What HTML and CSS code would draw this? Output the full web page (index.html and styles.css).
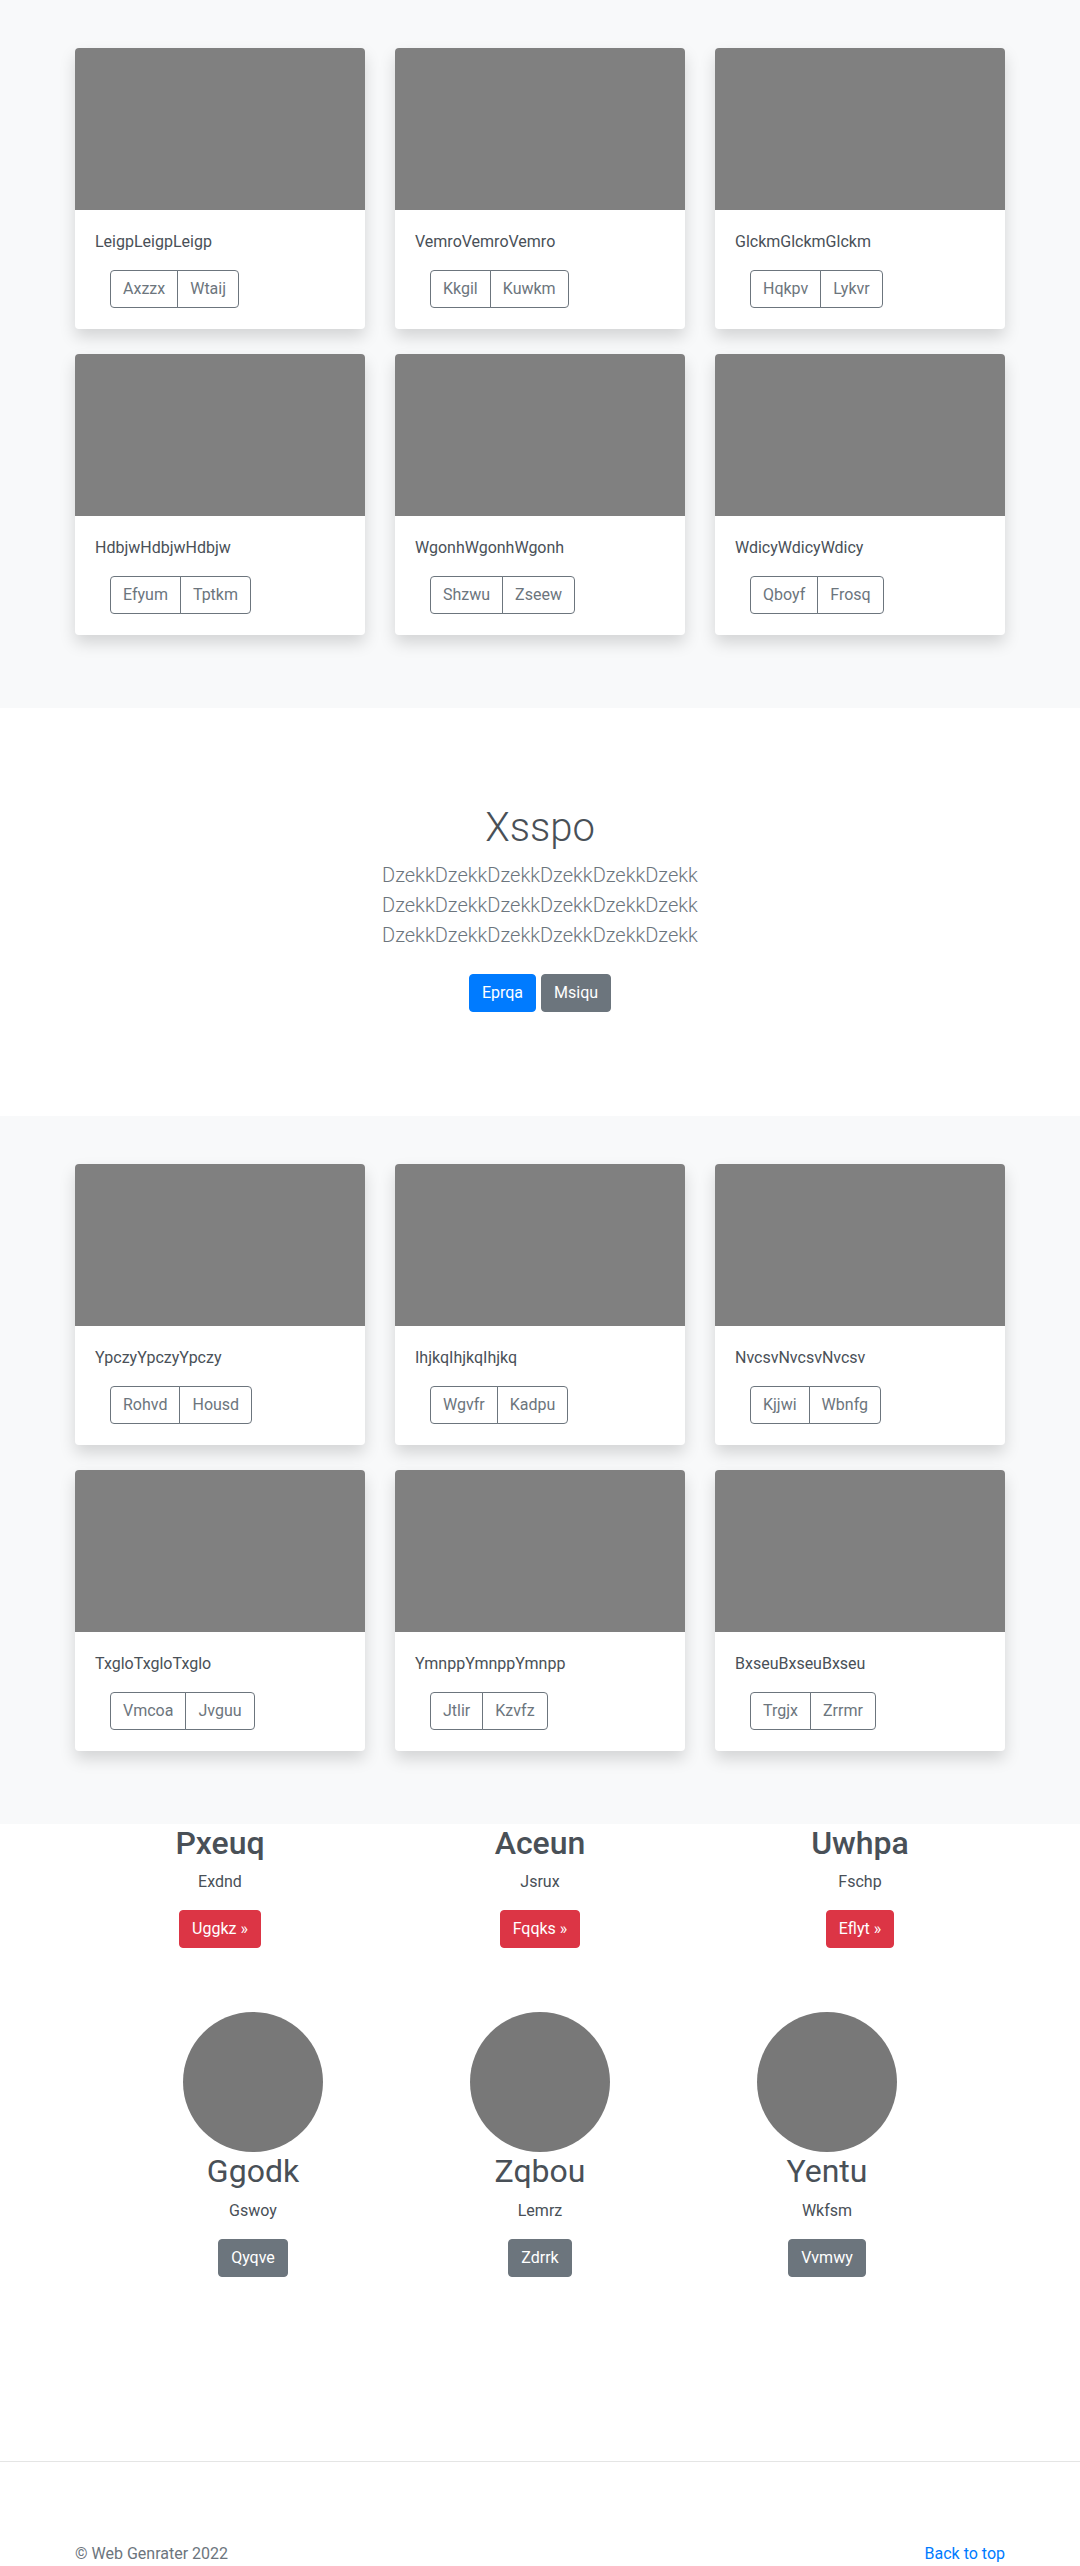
FILE: index.html
```
<!DOCTYPE html>
<html lang="en">
<head>
<meta charset="utf-8">
<title>Album</title>
<link rel="stylesheet" href="styles.css">
</head>
<body>
<main>
  <section class="album">
    <div class="container card-grid">
      <div class="card"><div class="card-img"></div><div class="card-body"><p class="card-text">LeigpLeigpLeigp</p><div class="btn-group"><a class="btn btn-outline" href="#">Axzzx</a><a class="btn btn-outline" href="#">Wtaij</a></div></div></div>
      <div class="card"><div class="card-img"></div><div class="card-body"><p class="card-text">VemroVemroVemro</p><div class="btn-group"><a class="btn btn-outline" href="#">Kkgil</a><a class="btn btn-outline" href="#">Kuwkm</a></div></div></div>
      <div class="card"><div class="card-img"></div><div class="card-body"><p class="card-text">GlckmGlckmGlckm</p><div class="btn-group"><a class="btn btn-outline" href="#">Hqkpv</a><a class="btn btn-outline" href="#">Lykvr</a></div></div></div>
      <div class="card"><div class="card-img"></div><div class="card-body"><p class="card-text">HdbjwHdbjwHdbjw</p><div class="btn-group"><a class="btn btn-outline" href="#">Efyum</a><a class="btn btn-outline" href="#">Tptkm</a></div></div></div>
      <div class="card"><div class="card-img"></div><div class="card-body"><p class="card-text">WgonhWgonhWgonh</p><div class="btn-group"><a class="btn btn-outline" href="#">Shzwu</a><a class="btn btn-outline" href="#">Zseew</a></div></div></div>
      <div class="card"><div class="card-img"></div><div class="card-body"><p class="card-text">WdicyWdicyWdicy</p><div class="btn-group"><a class="btn btn-outline" href="#">Qboyf</a><a class="btn btn-outline" href="#">Frosq</a></div></div></div>
    </div>
  </section>

  <section class="hero">
    <h1 class="hero-title">Xsspo</h1>
    <div class="hero-text">
      <p class="lead">DzekkDzekkDzekkDzekkDzekkDzekk DzekkDzekkDzekkDzekkDzekkDzekk DzekkDzekkDzekkDzekkDzekkDzekk</p>
    </div>
    <div class="hero-actions">
      <a class="btn btn-primary" href="#">Eprqa</a>
      <a class="btn btn-secondary" href="#">Msiqu</a>
    </div>
  </section>

  <section class="album">
    <div class="container card-grid">
      <div class="card"><div class="card-img"></div><div class="card-body"><p class="card-text">YpczyYpczyYpczy</p><div class="btn-group"><a class="btn btn-outline" href="#">Rohvd</a><a class="btn btn-outline" href="#">Housd</a></div></div></div>
      <div class="card"><div class="card-img"></div><div class="card-body"><p class="card-text">IhjkqIhjkqIhjkq</p><div class="btn-group"><a class="btn btn-outline" href="#">Wgvfr</a><a class="btn btn-outline" href="#">Kadpu</a></div></div></div>
      <div class="card"><div class="card-img"></div><div class="card-body"><p class="card-text">NvcsvNvcsvNvcsv</p><div class="btn-group"><a class="btn btn-outline" href="#">Kjjwi</a><a class="btn btn-outline" href="#">Wbnfg</a></div></div></div>
      <div class="card"><div class="card-img"></div><div class="card-body"><p class="card-text">TxgloTxgloTxglo</p><div class="btn-group"><a class="btn btn-outline" href="#">Vmcoa</a><a class="btn btn-outline" href="#">Jvguu</a></div></div></div>
      <div class="card"><div class="card-img"></div><div class="card-body"><p class="card-text">YmnppYmnppYmnpp</p><div class="btn-group"><a class="btn btn-outline" href="#">Jtlir</a><a class="btn btn-outline" href="#">Kzvfz</a></div></div></div>
      <div class="card"><div class="card-img"></div><div class="card-body"><p class="card-text">BxseuBxseuBxseu</p><div class="btn-group"><a class="btn btn-outline" href="#">Trgjx</a><a class="btn btn-outline" href="#">Zrrmr</a></div></div></div>
    </div>
  </section>

  <section class="marketing">
    <div class="features">
      <div class="feature">
        <h2 class="feature-title">Pxeuq</h2>
        <p class="feature-text">Exdnd</p>
        <p class="feature-action"><a class="btn btn-danger" href="#">Uggkz &raquo;</a></p>
      </div>
      <div class="feature">
        <h2 class="feature-title">Aceun</h2>
        <p class="feature-text">Jsrux</p>
        <p class="feature-action"><a class="btn btn-danger" href="#">Fqqks &raquo;</a></p>
      </div>
      <div class="feature">
        <h2 class="feature-title">Uwhpa</h2>
        <p class="feature-text">Fschp</p>
        <p class="feature-action"><a class="btn btn-danger" href="#">Eflyt &raquo;</a></p>
      </div>
    </div>
    <div class="team">
      <div class="member">
        <div class="avatar"></div>
        <h2 class="member-name">Ggodk</h2>
        <p class="feature-text">Gswoy</p>
        <p class="feature-action"><a class="btn btn-secondary" href="#">Qyqve</a></p>
      </div>
      <div class="member">
        <div class="avatar"></div>
        <h2 class="member-name">Zqbou</h2>
        <p class="feature-text">Lemrz</p>
        <p class="feature-action"><a class="btn btn-secondary" href="#">Zdrrk</a></p>
      </div>
      <div class="member">
        <div class="avatar"></div>
        <h2 class="member-name">Yentu</h2>
        <p class="feature-text">Wkfsm</p>
        <p class="feature-action"><a class="btn btn-secondary" href="#">Vvmwy</a></p>
      </div>
    </div>
  </section>
</main>
<hr class="divider">
<footer class="footer">
  <div class="container footer-inner">
    <p class="footer-copy">&copy; Web Genrater 2022</p>
    <a class="footer-link" href="#">Back to top</a>
  </div>
</footer>
</body>
</html>
```

FILE: styles.css
```
* { box-sizing: border-box; }

body {
  margin: 0;
  font-family: "Segoe UI", Roboto, "Noto Sans", "Liberation Sans", sans-serif;
  font-size: 16px;
  line-height: 1.5;
  color: #495057;
  background: #fff;
}

.container {
  width: 960px;
  margin: 0 auto;
  padding: 0 15px;
}

/* album */
.album {
  background: #f8f9fa;
  padding: 48px 0 73px;
}

.card-grid {
  display: grid;
  grid-template-columns: repeat(3, 1fr);
  column-gap: 30px;
  row-gap: 25px;
}

.card {
  background: #fff;
  border-radius: 4px;
  overflow: hidden;
  box-shadow: 0 8px 16px rgba(0, 0, 0, 0.15);
}

.card-img {
  height: 162px;
  background: #808080;
}

.card-body {
  padding: 20px 20px 21px;
}

.card-text {
  margin: 0 0 16px;
  line-height: 24px;
}

.btn-group {
  display: inline-flex;
  margin-left: 15px;
}

.btn {
  display: inline-block;
  padding: 6px 12px;
  font-size: 16px;
  line-height: 24px;
  border: 1px solid transparent;
  border-radius: 4px;
  text-decoration: none;
  text-align: center;
  white-space: nowrap;
}

.btn-outline {
  color: #6c757d;
  border-color: #6c757d;
  background: transparent;
}

.btn-group .btn:first-child {
  border-top-right-radius: 0;
  border-bottom-right-radius: 0;
}

.btn-group .btn + .btn {
  margin-left: -1px;
  border-top-left-radius: 0;
  border-bottom-left-radius: 0;
}

.btn-primary { background: #007bff; border-color: #007bff; color: #fff; }
.btn-secondary { background: #6c757d; border-color: #6c757d; color: #fff; }
.btn-danger { background: #dc3545; border-color: #dc3545; color: #fff; }

/* hero */
.hero {
  padding: 96px 0;
  text-align: center;
}

.hero-title {
  margin: 0 0 8px;
  font-size: 40px;
  font-weight: 300;
  line-height: 48px;
}

.hero-text {
  width: 450px;
  margin: 0 auto;
}

.lead {
  margin: 0 0 16px;
  font-size: 20px;
  font-weight: 300;
  line-height: 30px;
  color: #6c757d;
}

.hero-actions {
  display: flex;
  justify-content: center;
  gap: 5px;
  padding: 8px 0;
}

/* marketing */
.marketing {
  text-align: center;
}

.features {
  width: 960px;
  margin: 0 auto;
  display: grid;
  grid-template-columns: repeat(3, 1fr);
}

.feature-title,
.member-name {
  margin: 0 0 8px;
  font-size: 32px;
  line-height: 38.4px;
  font-weight: 500;
}

.member-name {
  font-weight: 400;
}

.feature-text,
.feature-action {
  margin: 0 0 16px;
}

.team {
  width: 861px;
  margin: 48px auto 0;
  display: grid;
  grid-template-columns: repeat(3, 1fr);
}

.avatar {
  width: 140px;
  height: 140px;
  margin: 0 auto;
  border-radius: 50%;
  background: #787878;
}

/* footer */
.divider {
  margin: 168px 0 0;
  border: 0;
  border-top: 1px solid rgba(0, 0, 0, 0.1);
}

.footer {
  padding-top: 80px;
  color: #6c757d;
}

.footer-inner {
  display: flex;
  justify-content: space-between;
}

.footer-copy {
  margin: 0;
}

.footer-link {
  color: #007bff;
  text-decoration: none;
}
```
